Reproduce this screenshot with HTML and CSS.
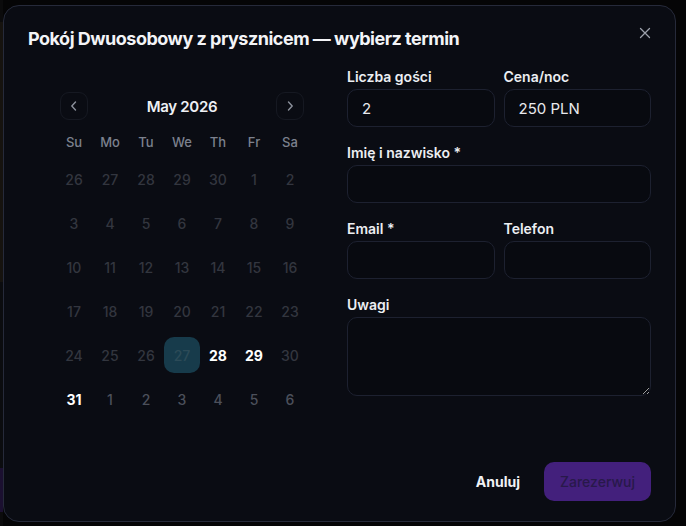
FILE: index.html
```html
<!DOCTYPE html>
<html lang="pl">
<head>
    <meta charset="UTF-8">
    <meta name="viewport" content="width=device-width, initial-scale=1.0">
    <title>Rezerwacja</title>
    <link rel="stylesheet" href="styles.css">
</head>
<body>

<div class="modal">
    <button class="close" aria-label="Zamknij">
        <svg width="12" height="12" viewBox="0 0 12 12"><path d="M1.5 1.5l9 9M10.5 1.5l-9 9" stroke="#9ca1ab" stroke-width="1.3" stroke-linecap="round"/></svg>
    </button>
    <h2 class="title">Pokój Dwuosobowy z prysznicem — wybierz termin</h2>

    <div class="body">
        <div class="calendar-col">
            <div class="calendar">
                <div class="cal-nav">
                    <button class="nav-btn">
                        <svg width="10" height="12" viewBox="0 0 10 12"><path d="M6.5 2L2.8 6l3.7 4" fill="none" stroke="#8b909b" stroke-width="1.4" stroke-linecap="round" stroke-linejoin="round"/></svg>
                    </button>
                    <span class="month">May 2026</span>
                    <button class="nav-btn">
                        <svg width="10" height="12" viewBox="0 0 10 12"><path d="M3.5 2l3.7 4-3.7 4" fill="none" stroke="#8b909b" stroke-width="1.4" stroke-linecap="round" stroke-linejoin="round"/></svg>
                    </button>
                </div>
                <div class="weekdays">
                    <span>Su</span><span>Mo</span><span>Tu</span><span>We</span><span>Th</span><span>Fr</span><span>Sa</span>
                </div>
                <div class="days">
                    <span class="off">26</span><span class="off">27</span><span class="off">28</span><span class="off">29</span><span class="off">30</span><span class="off">1</span><span class="off">2</span>
                    <span class="off">3</span><span class="off">4</span><span class="off">5</span><span class="off">6</span><span class="off">7</span><span class="off">8</span><span class="off">9</span>
                    <span class="off">10</span><span class="off">11</span><span class="off">12</span><span class="off">13</span><span class="off">14</span><span class="off">15</span><span class="off">16</span>
                    <span class="off">17</span><span class="off">18</span><span class="off">19</span><span class="off">20</span><span class="off">21</span><span class="off">22</span><span class="off">23</span>
                    <span class="off">24</span><span class="off">25</span><span class="off">26</span><span class="off selected">27</span><span class="on">28</span><span class="on">29</span><span class="off">30</span>
                    <span class="on">31</span><span class="next">1</span><span class="next">2</span><span class="next">3</span><span class="next">4</span><span class="next">5</span><span class="next">6</span>
                </div>
            </div>
        </div>

        <form class="form">
            <div class="row">
                <label class="field">
                    <span class="label">Liczba gości</span>
                    <input type="text" value="2">
                </label>
                <label class="field">
                    <span class="label">Cena/noc</span>
                    <input type="text" value="250 PLN" readonly>
                </label>
            </div>
            <label class="field">
                <span class="label">Imię i nazwisko *</span>
                <input type="text">
            </label>
            <div class="row">
                <label class="field">
                    <span class="label">Email *</span>
                    <input type="email">
                </label>
                <label class="field">
                    <span class="label">Telefon</span>
                    <input type="tel">
                </label>
            </div>
            <label class="field">
                <span class="label">Uwagi</span>
                <textarea></textarea>
            </label>
        </form>
    </div>

    <div class="footer">
        <button class="cancel">Anuluj</button>
        <button class="submit" disabled>Zarezerwuj</button>
    </div>
</div>

</body>
</html>
```

FILE: styles.css
```css
* {
    box-sizing: border-box;
}
body {
    margin: 0;
    height: 526px;
    overflow: hidden;
    font-family: Inter, "Noto Sans", sans-serif;
    background:
        linear-gradient(to bottom, #0b0b0c 0 22px, #16130f 22px 282px, #0b0c0f 282px 468px, #1b1030 468px 512px, #0b0b0c 512px) no-repeat 0 0 / 3px 100%,
        #050506;
}
.modal {
    position: relative;
    width: 673px;
    height: 517px;
    margin: 5px 0 0 3px;
    padding: 21px 24px 20px 23px;
    background: #0a0c13;
    border: 1px solid #262a3a;
    border-radius: 16px;
    display: flex;
    flex-direction: column;
}
.close {
    position: absolute;
    top: 17px;
    right: 20px;
    width: 20px;
    height: 20px;
    padding: 0;
    border: none;
    background: none;
    display: flex;
    align-items: center;
    justify-content: center;
}
.title {
    margin: 0 0 0 1px;
    font-size: 18px;
    line-height: 24px;
    font-weight: 700;
    color: #f3f4f7;
    letter-spacing: -0.5px;
}
.body {
    display: grid;
    grid-template-columns: 310px 1fr;
    gap: 10px;
    margin-top: 16px;
}

/* kalendarz */
.calendar {
    width: 252px;
    margin: 25px auto 0;
}
.cal-nav {
    display: flex;
    align-items: center;
    justify-content: space-between;
    padding: 0 4px;
    height: 28px;
}
.nav-btn {
    width: 28px;
    height: 28px;
    padding: 0;
    border: 1px solid #161922;
    border-radius: 9px;
    background: transparent;
    display: flex;
    align-items: center;
    justify-content: center;
}
.month {
    font-size: 15px;
    font-weight: 600;
    color: #eef0f4;
    letter-spacing: -0.3px;
}
.weekdays {
    display: grid;
    grid-template-columns: repeat(7, 36px);
    margin-top: 8px;
    height: 28px;
    align-items: center;
    margin-bottom: 5px;
}
.weekdays span {
    text-align: center;
    font-size: 13px;
    font-weight: 500;
    color: #7c818e;
}
.days {
    display: grid;
    grid-template-columns: repeat(7, 36px);
    grid-auto-rows: 36px;
    row-gap: 8px;
}
.days span {
    display: flex;
    align-items: center;
    justify-content: center;
    font-size: 14px;
    font-weight: 500;
    border-radius: 10px;
}
.days .off {
    color: #33363f;
}
.days .next {
    color: #4c505b;
}
.days .on {
    color: #ffffff;
    font-weight: 700;
}
.days .selected {
    background: #173b4b;
    color: #2c4b58;
}

/* formularz */
.form {
    display: flex;
    flex-direction: column;
    gap: 16px;
}
.row {
    display: grid;
    grid-template-columns: 1fr 1fr;
    gap: 9px;
}
.field {
    display: flex;
    flex-direction: column;
    gap: 2px;
}
.label {
    font-size: 14px;
    line-height: 20px;
    font-weight: 600;
    color: #eceef2;
}
input, textarea {
    width: 100%;
    height: 38px;
    padding: 0 14px;
    font-family: inherit;
    font-size: 15px;
    color: #e8e9ed;
    background: #080a10;
    border: 1px solid #1d2130;
    border-radius: 10px;
    outline: none;
}
textarea {
    height: 79px;
    padding: 10px 14px;
    resize: vertical;
}

.footer {
    margin-top: auto;
    display: flex;
    justify-content: flex-end;
    align-items: center;
    gap: 24px;
}
.cancel {
    padding: 0;
    border: none;
    background: none;
    font-family: inherit;
    font-size: 14px;
    font-weight: 700;
    color: #f1f2f5;
}
.submit {
    height: 39px;
    padding: 0 16px;
    border: none;
    border-radius: 10px;
    background: #43207c;
    font-family: inherit;
    font-size: 14px;
    font-weight: 500;
    color: #28194a;
}
```
